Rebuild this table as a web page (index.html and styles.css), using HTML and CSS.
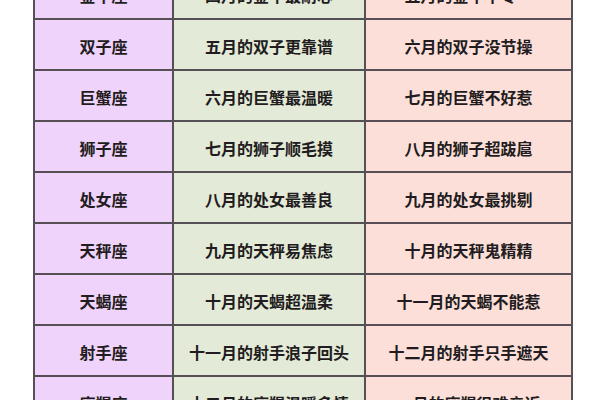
FILE: index.html
```html
<!DOCTYPE html>
<html lang="zh">
<head>
<meta charset="utf-8">
<link rel="stylesheet" href="styles.css">
</head>
<body>
<div class="page">
<table class="zodiac">
<colgroup><col class="c1"><col class="c2"><col class="c3"></colgroup>
<tbody>
<tr><td class="sign">金牛座</td><td class="good">四月的金牛最耐心</td><td class="bad">五月的金牛不专一</td></tr>
<tr><td class="sign">双子座</td><td class="good">五月的双子更靠谱</td><td class="bad">六月的双子没节操</td></tr>
<tr><td class="sign">巨蟹座</td><td class="good">六月的巨蟹最温暖</td><td class="bad">七月的巨蟹不好惹</td></tr>
<tr><td class="sign">狮子座</td><td class="good">七月的狮子顺毛摸</td><td class="bad">八月的狮子超跋扈</td></tr>
<tr><td class="sign">处女座</td><td class="good">八月的处女最善良</td><td class="bad">九月的处女最挑剔</td></tr>
<tr><td class="sign">天秤座</td><td class="good">九月的天秤易焦虑</td><td class="bad">十月的天秤鬼精精</td></tr>
<tr><td class="sign">天蝎座</td><td class="good">十月的天蝎超温柔</td><td class="bad">十一月的天蝎不能惹</td></tr>
<tr><td class="sign">射手座</td><td class="good">十一月的射手浪子回头</td><td class="bad">十二月的射手只手遮天</td></tr>
<tr><td class="sign">摩羯座</td><td class="good">十二月的摩羯温暖多情</td><td class="bad">一月的摩羯很难亲近</td></tr>
</tbody>
</table>
</div>
</body>
</html>
```
FILE: styles.css
```css
html, body {
  margin: 0;
  padding: 0;
  background: #ffffff;
}
.page {
  width: 600px;
  height: 400px;
  overflow: hidden;
  padding-left: 33px;
  box-sizing: border-box;
}
.zodiac {
  margin-top: -33px;
  border-collapse: collapse;
  table-layout: fixed;
  width: 538px;
  font-family: "Noto Sans CJK SC", "Noto Sans", sans-serif;
  font-size: 16px;
  font-weight: 700;
  color: #221c20;
}
.c1 { width: 139px; }
.c2 { width: 192px; }
.c3 { width: 207px; }
.zodiac td {
  height: 47px;
  padding: 2px 0 0;
  border: 2px solid #565056;
  text-align: center;
  vertical-align: middle;
  white-space: nowrap;
}
.sign { background: #efd3fa; }
.good { background: #e3ead7; }
.bad { background: #fcdfd9; }
```
